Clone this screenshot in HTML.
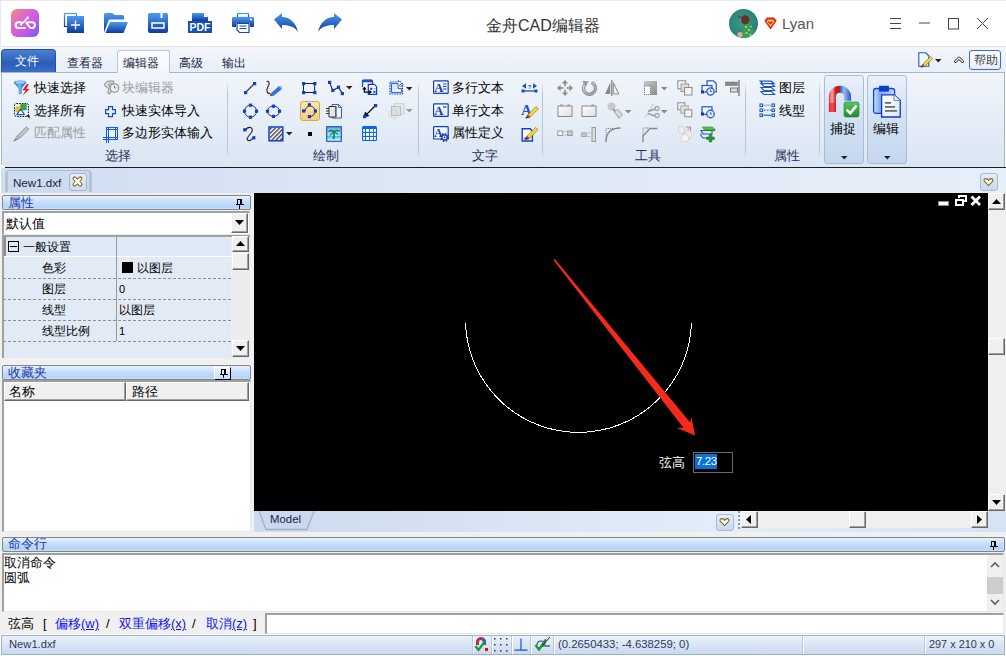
<!DOCTYPE html>
<html><head><meta charset="utf-8">
<style>
*{box-sizing:border-box;margin:0;padding:0}
html,body{width:1006px;height:656px;overflow:hidden;background:#fff;font-family:"Liberation Sans",sans-serif;font-size:12px;color:#000}
.a{position:absolute}
svg{position:absolute;overflow:visible}
#title{left:0;top:0;width:1006px;height:47px;background:#fff;border-top:1px solid #e8e8e8;border-left:1px solid #e8e8e8;border-bottom:1px solid #e3e3e3}
#tabs{left:0;top:47px;width:1006px;height:26px;background:linear-gradient(#f3f6fb,#e9eff8)}
#ribbon{left:1px;top:72px;width:1004px;height:95px;background:linear-gradient(#f1f5fb 0%,#e8eff8 40%,#dae5f3 100%);border:1px solid #a4b6ce;border-bottom:none}
#docstrip{left:1px;top:168px;width:1005px;height:25px;background:linear-gradient(90deg,#d0def2,#dfe8f5 50%,#e6eef9)}
#leftbg{left:0;top:193px;width:1006px;height:441px;background:#f0f0f0}
#canvas{left:254px;top:193px;width:736px;height:318px;background:#000}
#cmd{display:none}
#status{left:0;top:634px;width:1006px;height:22px;background:linear-gradient(#dde8f5,#cfdcee)}
.tt{font-size:12px;line-height:12px;white-space:nowrap;color:#15233f;font-weight:500}
.rt{font-size:13px;line-height:13px;white-space:nowrap;font-weight:500}
</style></head><body>
<div id="title" class="a"></div>
<!-- logo -->
<div class="a" style="left:11px;top:9px;width:28px;height:28px;border-radius:6px;background:linear-gradient(135deg,#f5916a 0%,#dc68cc 35%,#c055ee 70%,#5d62f2 100%)"></div>
<svg style="left:11px;top:9px" width="28" height="28" viewBox="0 0 28 28"><g fill="none" stroke="#fff" stroke-width="2" stroke-linecap="round"><path d="M10 13.2H7.5A2.9 2.9 0 0 0 7.5 19H14"/><path d="M15.2 13.6L18.8 18.3Q19.4 19 20.4 19H21A2.9 2.9 0 0 0 21 13.2H17"/><path d="M10 15.6L16.7 8.9" stroke-dasharray="1.6 1.2" stroke-width="1.6"/></g><circle cx="16.7" cy="8.9" r="1.3" fill="#fff"/><circle cx="10" cy="15.6" r="1.1" fill="#fff"/></svg>
<!-- new -->
<svg style="left:64px;top:13px" width="20" height="20" viewBox="0 0 20 20"><defs><linearGradient id="gb" x1="0" y1="0" x2="0" y2="1"><stop offset="0" stop-color="#4f9af0"/><stop offset="1" stop-color="#0b3c9e"/></linearGradient></defs><rect x="0.5" y="0.5" width="12" height="13" fill="none" stroke="url(#gb)" stroke-width="1.2"/><rect x="3" y="3" width="17" height="17" fill="url(#gb)"/><path d="M11.5 7.5v9M7 12h9" stroke="#fff" stroke-width="1.3"/></svg>
<!-- open -->
<svg style="left:104px;top:13px" width="24" height="20" viewBox="0 0 24 20"><path d="M0 1.5a1.5 1.5 0 0 1 1.5-1.5h7l2 2h8a1.5 1.5 0 0 1 1.5 1.5v3h-15l-5 13z" fill="url(#gb)"/><path d="M6 9h18l-4.5 11h-18z" fill="url(#gb)"/></svg>
<!-- save -->
<svg style="left:148px;top:13px" width="20" height="20" viewBox="0 0 20 20"><path d="M1.5 0h11v5h2v-5h3a2 2 0 0 1 2.5 2v16a2 2 0 0 1-2 2h-16a2 2 0 0 1-2-2v-16a2 2 0 0 1 1.5-2z" fill="url(#gb)"/><rect x="4" y="10" width="12" height="5" fill="none" stroke="#fff" stroke-width="1.5"/></svg>
<!-- pdf -->
<svg style="left:188px;top:13px" width="24" height="20" viewBox="0 0 24 20"><path d="M4 0h12l4 4v4h-16z" fill="url(#gb)"/><path d="M16 0v4h4" fill="#fff"/><rect x="0" y="8" width="24" height="12" fill="#1450b8"/><text x="12" y="18" font-family="Liberation Sans" font-weight="bold" font-size="10.5" fill="#fff" text-anchor="middle">PDF</text></svg>
<!-- print -->
<svg style="left:232px;top:13px" width="22" height="20" viewBox="0 0 22 20"><rect x="5.5" y="0.5" width="11" height="4" fill="none" stroke="url(#gb)" stroke-width="1.2"/><rect x="0" y="4" width="22" height="10" rx="1" fill="url(#gb)"/><circle cx="19" cy="6.5" r="1.1" fill="#fff"/><path d="M4 10h14v10h-11l-3-3z" fill="#fff"/><path d="M5 10.5h12v9h-9.5l-2.5-2.5z" fill="none" stroke="#1248a8" stroke-width="1.2"/><path d="M7.5 13h7M7.5 15.5h7" stroke="#1248a8" stroke-width="1"/></svg>
<!-- undo -->
<svg style="left:274px;top:13px" width="24" height="20" viewBox="0 0 24 20"><path d="M0 6.5L8 0v4c8 0 14 6 16 15c-3-5-8-7-16-7v4z" fill="url(#gb)"/></svg>
<!-- redo -->
<svg style="left:318px;top:13px" width="24" height="20" viewBox="0 0 24 20"><path d="M24 6.5L16 0v4c-8 0-14 6-16 15c3-5 8-7 16-7v4z" fill="url(#gb)"/></svg>
<!-- title -->
<div class="a" style="left:486px;top:16px;font-size:16px;line-height:20px;color:#333;white-space:nowrap">金舟CAD编辑器</div>
<!-- avatar -->
<svg style="left:729px;top:9px" width="29" height="29" viewBox="0 0 29 29"><defs><clipPath id="av"><circle cx="14.5" cy="14.5" r="14.5"/></clipPath><radialGradient id="avb" cx=".45" cy=".45" r=".6"><stop offset="0" stop-color="#3a9a8e"/><stop offset="1" stop-color="#2a7a72"/></radialGradient></defs><g clip-path="url(#av)"><rect width="29" height="29" fill="url(#avb)"/><path d="M9.5 5.5l2.5 2.5-1 4.5-1.5-1z" fill="#3a5a50"/><circle cx="11.5" cy="10.5" r="1.6" fill="#7a9a8a"/><path d="M14.5 14.5Q17 13.5 19.5 14.5Q24 17 25 24L25 30H13Q12 24 14.5 14.5z" fill="#3d9a58"/><g fill="#cfe8c8" opacity=".8"><circle cx="17" cy="18" r="1"/><circle cx="20" cy="21" r="1.1"/><circle cx="22" cy="17.5" r=".8"/><circle cx="17.5" cy="24" r="1"/><circle cx="21.5" cy="26" r="1"/></g><ellipse cx="16.2" cy="10.8" rx="4.3" ry="4.6" fill="#5c3526"/><path d="M8 25Q10 22 13 23.5L14 27 10 29z" fill="#d8b0a0"/></g></svg>
<svg style="left:764px;top:17px" width="13" height="13" viewBox="0 0 13 13"><path d="M3 0.5h7l2.7 3.3L6.5 12.5L0.3 3.8z" fill="#e02020"/><path d="M4 2.5h5l1.6 1.8L6.5 10L2.4 4.3z" fill="#f6c63a"/><path d="M4.5 4.5l2 2 2-2" fill="none" stroke="#e02020" stroke-width="1.4"/></svg>
<div class="a" style="left:782px;top:15px;font-size:15px;line-height:18px;color:#555">Lyan</div>
<!-- window controls -->
<svg style="left:890px;top:18px" width="12" height="12" viewBox="0 0 12 12"><path d="M0 0.5h11M0 5.5h11M0 10.5h11" stroke="#444" stroke-width="1"/></svg>
<svg style="left:919px;top:22px" width="12" height="2" viewBox="0 0 12 2"><path d="M0 1h11" stroke="#444" stroke-width="1"/></svg>
<svg style="left:948px;top:18px" width="12" height="12" viewBox="0 0 12 12"><rect x="0.5" y="0.5" width="10" height="10.5" fill="none" stroke="#444" stroke-width="1"/></svg>
<svg style="left:977px;top:18px" width="12" height="12" viewBox="0 0 12 12"><path d="M0 0L11 11M11 0L0 11" stroke="#444" stroke-width="1"/></svg>

<div id="tabs" class="a"></div>
<div id="ribbon" class="a"></div>
<!-- tabs -->
<div class="a" style="left:1px;top:49px;width:55px;height:23px;border-radius:4px 4px 0 0;background:linear-gradient(#4a7fd0,#2a5db8 60%,#3a6fc8);border:1px solid #2452a0;border-bottom:none"></div>
<div class="a tt" style="left:15px;top:55px;color:#fff">文件</div>
<div class="a tt" style="left:67px;top:58px;font-size:11.5px;line-height:11.5px">查看器</div>
<div class="a" style="left:117px;top:50px;width:53px;height:23px;border-radius:3px 3px 0 0;background:linear-gradient(#fbfdff,#f3f7fc);border:1px solid #b6c6dc;border-bottom:none"></div>
<div class="a tt" style="left:123px;top:58px;font-size:11.5px;line-height:11.5px">编辑器</div>
<div class="a tt" style="left:178.5px;top:58px;font-size:11.5px;line-height:11.5px">高级</div>
<div class="a tt" style="left:222px;top:58px;font-size:11.5px;line-height:11.5px">输出</div>

<!-- RIBBON CONTENT -->
<div id="rib">
<!-- group select -->
<svg style="left:13px;top:80px" width="18" height="17" viewBox="0 0 18 17"><defs><linearGradient id="fun" x1="0" x2="1"><stop offset="0" stop-color="#1a60c8"/><stop offset=".45" stop-color="#6ab8f8"/><stop offset="1" stop-color="#1858c0"/></linearGradient></defs><ellipse cx="7" cy="2.6" rx="6.2" ry="2.2" fill="#2a78e0"/><path d="M0.8 2.6Q7 5.5 13.2 2.6L8.8 8.5V13.5Q7.3 15 5.6 14.2V8.5z" fill="url(#fun)"/><ellipse cx="7" cy="2.4" rx="5" ry="1.3" fill="#9ad0ff"/><path d="M13.8 4L9.4 10.2h3.4L9.6 15.8l7-6.8h-3.3l2.6-5z" fill="#e81c24"/></svg>
<div class="a rt" style="left:34px;top:81px">快速选择</div>
<svg style="left:13px;top:102px" width="17" height="17" viewBox="0 0 17 17"><rect x="1.5" y="1.5" width="14" height="13" rx="2" fill="none" stroke="#111" stroke-width="1" stroke-dasharray="1.6 1.1"/><rect x="7.8" y="2.5" width="5.4" height="5.4" fill="#2eaa3a" stroke="#1a7a2a" stroke-width=".5"/><circle cx="5.5" cy="7.5" r="2.9" fill="#f5c518" stroke="#c89a10" stroke-width=".5"/><path d="M7.6 6.8L11.4 12.6H3.8z" fill="#fff" stroke="#1f5fc8" stroke-width="1.2" stroke-linejoin="round"/><path d="M13.2 13.2h3.3v3.3z" fill="#000"/></svg>
<div class="a rt" style="left:34px;top:104px">选择所有</div>
<svg style="left:13px;top:125px" width="17" height="17" viewBox="0 0 17 17"><path d="M1 16L4.5 10.5L13.5 1.8L16 4.2L7 13z" fill="#c4c4c4" stroke="#8a8a8a" stroke-width=".8"/><path d="M4.5 10.5L7 13" stroke="#9a9a9a" stroke-width="1"/><path d="M1 16l3.5-2.2" stroke="#888" stroke-width="1.2"/></svg>
<div class="a rt" style="left:34px;top:126px;color:#9a9a9a">匹配属性</div>
<svg style="left:104px;top:80px" width="16" height="16" viewBox="0 0 16 16"><path d="M0.5 3.5L4 1h6l-1 3H5v2l3 3-2 5-2.5-1L5 9 1 6z" fill="#d8d8d8" stroke="#888" stroke-width=".9"/><circle cx="10.5" cy="8" r="4.3" fill="#eee" stroke="#8a8a8a" stroke-width="1.1"/><path d="M10.5 5.5v2.5h2" fill="none" stroke="#888" stroke-width="1"/></svg>
<div class="a rt" style="left:122px;top:81px;color:#9a9a9a">块编辑器</div>
<svg style="left:105px;top:106px" width="11" height="11" viewBox="0 0 11 11"><path d="M3.5 0.6h4v3h2.9v4h-2.9v3h-4v-3H0.6v-4h2.9z" fill="#e8f0fc" stroke="#1448c8" stroke-width="1.2"/></svg>
<div class="a rt" style="left:122px;top:104px">快速实体导入</div>
<svg style="left:103px;top:126px" width="16" height="17" viewBox="0 0 16 17"><path d="M3 1.5h12M3 3.5h12M12.5 1v13M14.5 1v13M3.5 1v16M5.5 1v16M0 11.5h15M0 13.5h15" stroke="#0f5ae8" stroke-width="1"/><rect x="6" y="4" width="6" height="7" fill="#fff" opacity=".5"/></svg>
<div class="a rt" style="left:122px;top:126px">多边形实体输入</div>
<div class="a rt" style="left:105px;top:149px;color:#1f2f58">选择</div>
<div class="a" style="left:227px;top:81px;width:1px;height:81px;background:linear-gradient(#eef2f8,#b9c6d8 15%,#b9c6d8 85%,#eef2f8)"></div>
<!-- group draw -->
<svg style="left:240px;top:78px" width="20" height="20" viewBox="0 0 20 20"><path d="M5.5 14.5L14.5 5.5" stroke="#333" stroke-width="1.1"/><rect x="4" y="13" width="3.2" height="3.2" fill="#0c3fd6"/><rect x="13" y="4" width="3.2" height="3.2" fill="#0c3fd6"/></svg>
<svg style="left:264px;top:80px" width="20" height="16" viewBox="0 0 20 16"><path d="M2.5 1.5C5 0.5 6 3 4.5 5.5S2 10 3.5 12.5Q5 14 6 13" fill="none" stroke="#222" stroke-width="1.1"/><path d="M7 13.5L15 6.5L17.5 9L9.5 15.5L6.5 15.8z" fill="#2f76e0" stroke="#1f56b8" stroke-width=".6"/><path d="M15 6.5l1.2-1 2.4 2.5-1.1 1z" fill="#7fb4f2"/><circle cx="6.8" cy="15" r="1.1" fill="#e02a2a"/></svg>
<svg style="left:301px;top:81px" width="17" height="14" viewBox="0 0 17 14"><rect x="2.5" y="2.5" width="11.2" height="9" fill="none" stroke="#222" stroke-width="1"/><g fill="#0c3fd6"><rect x="1" y="1" width="3.2" height="3.2"/><rect x="12.2" y="1" width="3.2" height="3.2"/><rect x="1" y="10" width="3.2" height="3.2"/><rect x="12.2" y="10" width="3.2" height="3.2"/></g></svg>
<svg style="left:326px;top:80px" width="20" height="16" viewBox="0 0 20 16"><path d="M3.6 2.4L6.8 10.4L12.5 7.2L16.4 13.6" fill="none" stroke="#222" stroke-width="1.1"/><g fill="#0c3fd6"><rect x="2" y="0.8" width="3.2" height="3.2"/><rect x="5.2" y="8.8" width="3.2" height="3.2"/><rect x="10.9" y="5.6" width="3.2" height="3.2"/><rect x="14.8" y="12" width="3.2" height="3.2"/></g></svg>
<svg style="left:346px;top:86px" width="7" height="4" viewBox="0 0 7 4"><path d="M0 0h6.5L3.25 3.5z" fill="#222"/></svg>
<svg style="left:361px;top:79px" width="18" height="17" viewBox="0 0 18 17"><path d="M1.5 8V2.5Q1.5 1 3 1H10Q11.5 1 11.5 2.5V5" fill="#eef3fc" stroke="#0a50e0" stroke-width="1.2"/><rect x="1" y="0.8" width="10.8" height="2.4" rx="1" fill="#0a50e0"/><circle cx="9.6" cy="2.2" r="1.1" fill="#e01010"/><path d="M7.3 5.4H13.3L15.6 7.7V15.4H7.3z" fill="#fff" stroke="#0a3ec8" stroke-width="1.2"/><rect x="9.2" y="8.7" width="2.2" height="2.2" fill="#0a50e0"/><rect x="12.3" y="11.7" width="2.2" height="2.2" fill="#0a50e0"/><path d="M12.8 9.6h2" stroke="#888" stroke-width=".9"/><path d="M3.4 9.2V13.1H8.6" fill="none" stroke="#000" stroke-width="1.3"/><path d="M1.2 10.4L3.4 7.4L5.6 10.4z" fill="#000"/><path d="M8.2 10.9L11 13.1L8.2 15.3z" fill="#000"/></svg>
<svg style="left:388px;top:80px" width="17" height="16" viewBox="0 0 17 16"><path d="M2 2h7.5l1.5-1.5L14.5 4v10H2z" fill="none" stroke="#0c3fd6" stroke-width="1.2" stroke-dasharray="1.6 1"/><path d="M3.5 3.5h6.5v5h3.5v4H3.5z" fill="url(#lb)" stroke="#0c3fd6" stroke-width=".8"/><defs><linearGradient id="lb" x1="0" y1="0" x2="1" y2="1"><stop offset="0" stop-color="#cfe0fa"/><stop offset="1" stop-color="#f4f8ff"/></linearGradient></defs><path d="M11 6l3-3M12.5 7l2.5-2.5" stroke="#0c3fd6" stroke-width=".9"/></svg>
<svg style="left:406px;top:87px" width="7" height="4" viewBox="0 0 7 4"><path d="M0 0h6.5L3.25 3.5z" fill="#222"/></svg>
<svg style="left:242px;top:103px" width="17" height="16" viewBox="0 0 17 16"><circle cx="8.5" cy="8.2" r="6" fill="none" stroke="#333" stroke-width="1"/><g fill="#0c3fd6"><rect x="6.9" y="0.6" width="3.2" height="3.2"/><rect x="6.9" y="12.6" width="3.2" height="3.2"/><rect x="0.9" y="6.6" width="3.2" height="3.2"/><rect x="12.9" y="6.6" width="3.2" height="3.2"/></g></svg>
<svg style="left:265px;top:104px" width="17" height="15" viewBox="0 0 17 15"><ellipse cx="8.5" cy="7.2" rx="6" ry="5.2" fill="none" stroke="#333" stroke-width="1"/><g fill="#0c3fd6"><rect x="6.9" y="0.6" width="3.2" height="3.2"/><rect x="6.9" y="10.8" width="3.2" height="3.2"/><rect x="0.9" y="5.6" width="3.2" height="3.2"/><rect x="12.9" y="5.6" width="3.2" height="3.2"/></g></svg>
<div class="a" style="left:300px;top:101px;width:20px;height:20px;border-radius:3px;border:1px solid #dea44c;background:linear-gradient(#fde9ad,#f9cf78)"></div>
<svg style="left:300px;top:101px" width="20" height="20" viewBox="0 0 20 20"><path d="M5 10.5A5 5.8 0 1 1 15.2 11.2Q14 15 9.8 16.2" fill="none" stroke="#333" stroke-width="1"/><g fill="#0c3fd6"><rect x="7.8" y="2.2" width="3.2" height="3.2"/><rect x="2" y="8.4" width="3.2" height="3.2"/><rect x="13.8" y="8.4" width="3.2" height="3.2"/><rect x="7.8" y="14" width="3.2" height="3.2"/></g></svg>
<svg style="left:325px;top:103px" width="18" height="16" viewBox="0 0 18 16"><path d="M7 1.5h6.5L16.5 4.5V15H7z" fill="#eef3fc" stroke="#2560c8" stroke-width="1"/><path d="M13.5 1.5v3h3" fill="none" stroke="#2560c8" stroke-width=".8"/><path d="M4 3.5h7v10.5H4z" fill="#e8e8e8" stroke="#333" stroke-width="1"/><path d="M1 5.5h3M1 8h3M1 10.5h3" stroke="#333" stroke-width="1"/><path d="M11 3.5q-1.5 5 0 10.5" fill="none" stroke="#555" stroke-width=".8"/></svg>
<svg style="left:362px;top:103px" width="16" height="16" viewBox="0 0 16 16"><path d="M13.5 2.5L3 13" stroke="#111" stroke-width="1.3"/><path d="M1.5 14.5l1.5-6 4.5 4.5z" fill="#111"/><rect x="12" y="1" width="3.2" height="3.2" fill="#0c3fd6"/><rect x="1" y="12" width="3.2" height="3.2" fill="#0c3fd6"/></svg>
<svg style="left:388px;top:103px" width="17" height="16" viewBox="0 0 17 16"><rect x="6" y="0.8" width="10" height="10" fill="#ececec" stroke="#c8c8c8" stroke-width=".9"/><rect x="3.5" y="3.5" width="9" height="9" fill="#e0e0e0" stroke="#b8b8b8" stroke-width=".9"/><circle cx="5.2" cy="11" r="4.3" fill="none" stroke="#d2d2d2" stroke-width="1"/></svg>
<svg style="left:406px;top:109px" width="7" height="4" viewBox="0 0 7 4"><path d="M0 0h6.5L3.25 3.5z" fill="#999"/></svg>
<svg style="left:242px;top:126px" width="15" height="16" viewBox="0 0 15 16"><path d="M3.5 4.5Q5 0.8 8.5 1.5Q11.5 2.5 9.5 6.5Q6.5 10 5 12.5Q5 15 8 14.5Q10 13.5 11 12" fill="none" stroke="#222" stroke-width="1.1"/><rect x="1.2" y="2.2" width="3.2" height="3.2" fill="#0c3fd6"/><rect x="10.2" y="10.2" width="3.2" height="3.2" fill="#0c3fd6"/></svg>
<svg style="left:268px;top:126px" width="16" height="16" viewBox="0 0 16 16"><defs><pattern id="ht" width="3" height="3" patternUnits="userSpaceOnUse" patternTransform="rotate(45)"><rect width="1.3" height="3" fill="#333"/></pattern></defs><rect x="1.7" y="1.7" width="12.3" height="12.3" fill="#fff"/><rect x="1.7" y="1.7" width="12.3" height="12.3" fill="url(#ht)"/><rect x="1" y="1" width="13.8" height="13.8" fill="none" stroke="#0c3fd6" stroke-width="1.5"/></svg>
<svg style="left:286px;top:132px" width="7" height="4" viewBox="0 0 7 4"><path d="M0 0h6.5L3.25 3.5z" fill="#222"/></svg>
<div class="a" style="left:308px;top:132px;width:4px;height:4px;background:#000"></div>
<svg style="left:326px;top:126px" width="16" height="16" viewBox="0 0 16 16"><defs><linearGradient id="sky" x1="0" y1="0" x2="0" y2="1"><stop offset="0" stop-color="#5aa8f0"/><stop offset=".65" stop-color="#bfe4ff"/><stop offset=".66" stop-color="#36c0f0"/><stop offset="1" stop-color="#ffffff"/></linearGradient></defs><rect x="0.7" y="0.7" width="14.6" height="14.6" fill="url(#sky)" stroke="#1f56c0" stroke-width="1.2"/><path d="M7.5 13Q8.5 9 8 5" stroke="#0f7a3a" stroke-width="1.6" fill="none"/><path d="M8 5Q5 3 2.5 5.5Q5 4.5 8 5.5Q10.5 3 13.5 5Q11 4.3 8 5.5Q6 7 4 9.5Q7 7 8 5.5Q10 7 12 9Q10.5 6 8 5.5z" fill="#138a44" stroke="#138a44" stroke-width="1"/></svg>
<svg style="left:362px;top:126px" width="15" height="15" viewBox="0 0 15 15"><rect x="0" y="0" width="15" height="15" rx="1.5" fill="#0a62ee"/><g fill="#f4f8ff"><rect x="1.1" y="3" width="1.9" height="2.9"/><rect x="1.1" y="7" width="1.9" height="2.9"/><rect x="1.1" y="11" width="1.9" height="2.9"/><rect x="4" y="3" width="3.0" height="2.9"/><rect x="4" y="7" width="3.0" height="2.9"/><rect x="4" y="11" width="3.0" height="2.9"/><rect x="7.9" y="3" width="3.1" height="2.9"/><rect x="7.9" y="7" width="3.1" height="2.9"/><rect x="7.9" y="11" width="3.1" height="2.9"/><rect x="11.9" y="3" width="2.0" height="2.9"/><rect x="11.9" y="7" width="2.0" height="2.9"/><rect x="11.9" y="11" width="2.0" height="2.9"/></g></svg>
<div class="a rt" style="left:313px;top:149px;color:#1f2f58">绘制</div>
<div class="a" style="left:418px;top:81px;width:1px;height:81px;background:linear-gradient(#eef2f8,#b9c6d8 15%,#b9c6d8 85%,#eef2f8)"></div>
<!-- group text -->
<svg style="left:433px;top:80px" width="16" height="14" viewBox="0 0 16 14"><rect x="0.6" y="0.9" width="14.6" height="12.4" rx=".6" fill="url(#tb)" stroke="#1040c0" stroke-width="1.2"/><defs><linearGradient id="tb" x1="0" y1="0" x2="1" y2="1"><stop offset="0" stop-color="#fff"/><stop offset="1" stop-color="#dfe9f8"/></linearGradient></defs><text x="1.3" y="12" font-family="Liberation Serif" font-weight="bold" font-size="12.5" fill="#1038b0">A</text><path d="M10 4h3.5M10 6.5h3.5M10 9h3.5" stroke="#1b4fb8" stroke-width="1"/></svg>
<div class="a rt" style="left:452px;top:81px">多行文本</div>
<svg style="left:433px;top:103px" width="16" height="14" viewBox="0 0 16 14"><rect x="0.6" y="0.9" width="14.6" height="12.4" rx=".6" fill="url(#tb)" stroke="#1040c0" stroke-width="1.2"/><text x="1.3" y="12" font-family="Liberation Serif" font-weight="bold" font-size="12.5" fill="#1038b0">A</text><path d="M10 4h3.5" stroke="#1b4fb8" stroke-width="1.2"/></svg>
<div class="a rt" style="left:452px;top:104px">单行文本</div>
<svg style="left:433px;top:126px" width="17" height="17" viewBox="0 0 17 17"><rect x="0.6" y="0.6" width="14.6" height="12.4" rx=".6" fill="url(#tb)" stroke="#1040c0" stroke-width="1.2"/><text x="1.3" y="10.8" font-family="Liberation Serif" font-weight="bold" font-size="11.5" fill="#1038b0">A</text><circle cx="11.5" cy="11.5" r="3.3" fill="none" stroke="#1a3aa8" stroke-width="2.6" stroke-dasharray="1.3 1.3"/><circle cx="11.5" cy="11.5" r="2.6" fill="#e8f0ff" stroke="#1a3aa8" stroke-width="1.1"/><circle cx="11.5" cy="11.5" r=".9" fill="#1a3aa8"/></svg>
<div class="a rt" style="left:452px;top:126px">属性定义</div>
<svg style="left:521px;top:83px" width="17" height="10" viewBox="0 0 17 10"><path d="M1.5 8h14" stroke="#1b4fb8" stroke-width="1.3"/><rect x="0.5" y="6.5" width="3" height="3" fill="#1b4fb8"/><rect x="13.5" y="6.5" width="3" height="3" fill="#1b4fb8"/><path d="M1 3L5 0.3v5.4zM16 3L12 0.3v5.4z" fill="#1b4fb8"/><text x="8.5" y="5.5" font-family="Liberation Sans" font-weight="bold" font-size="6" fill="#1b4fb8" text-anchor="middle">?</text></svg>
<svg style="left:521px;top:102px" width="18" height="17" viewBox="0 0 18 17"><text x="0" y="13" font-family="Liberation Serif" font-weight="bold" font-size="15" fill="#1f56c8">A</text><path d="M6 13.8L15 4.6L17.4 6.8L8.3 15.8z" fill="#f6d830" stroke="#7a6a10" stroke-width=".6"/><path d="M6 13.8L4.2 16.6L8.3 15.8z" fill="#2a2a3a"/><path d="M6.6 13.2L8.9 15.3" stroke="#e02828" stroke-width="1.3"/></svg>
<svg style="left:521px;top:125px" width="18" height="17" viewBox="0 0 18 17"><path d="M1.2 3.8h8l2.2 2.2v10H1.2z" fill="url(#tb)" stroke="#1040c8" stroke-width="1.4"/><path d="M3 13.2h5.5" stroke="#1040c8" stroke-width="1"/><path d="M5.2 12L14.6 2.4L17 4.6L7.6 14.2z" fill="#f6d830" stroke="#7a6a10" stroke-width=".6"/><path d="M5.2 12L3.4 14.9L7.6 14.2z" fill="#2a2a3a"/><path d="M5.8 11.4L8.1 13.5" stroke="#e02828" stroke-width="1.3"/></svg>
<div class="a rt" style="left:472px;top:149px;color:#1f2f58">文字</div>
<div class="a" style="left:542px;top:81px;width:1px;height:81px;background:linear-gradient(#eef2f8,#b9c6d8 15%,#b9c6d8 85%,#eef2f8)"></div>
<!-- group tools -->
<defs></defs>
<svg style="left:557px;top:80px" width="16" height="16" viewBox="0 0 16 16"><g fill="#8a8a8a"><path d="M8 0L11.2 3.6H4.8z"/><path d="M8 16L11.2 12.4H4.8z"/><path d="M0 8L3.6 4.8V11.2z"/><path d="M16 8L12.4 4.8V11.2z"/></g><path d="M8 3v10M3 8h10" stroke="#9a9a9a" stroke-width="1.8"/><rect x="6.3" y="6.3" width="3.4" height="3.4" fill="#eee"/></svg>
<svg style="left:581px;top:80px" width="16" height="16" viewBox="0 0 16 16"><defs><linearGradient id="rg" x1="0" y1="0" x2="1" y2="1"><stop offset="0" stop-color="#e0e0e0"/><stop offset="1" stop-color="#9a9a9a"/></linearGradient></defs><path d="M5.2 3.2A6 6 0 1 0 10.5 2.6" fill="none" stroke="#8e8e8e" stroke-width="3.4"/><path d="M5.2 3.2A6 6 0 1 0 10.5 2.6" fill="none" stroke="url(#rg)" stroke-width="1.6"/><path d="M1.2 0.8L7.6 1.2L4.6 6.6z" fill="#999"/></svg>
<svg style="left:604px;top:80px" width="16" height="16" viewBox="0 0 16 16"><path d="M7.8 0v16" stroke="#666" stroke-width="1"/><path d="M6.3 2.5v11.5H1z" fill="#8a8a8a"/><path d="M9.3 2.5v11.5h5.5z" fill="#eee" stroke="#8a8a8a" stroke-width="1"/></svg>
<svg style="left:643px;top:80px" width="15" height="16" viewBox="0 0 15 16"><defs><linearGradient id="gg" x1="0" y1="0" x2="1" y2="1"><stop offset="0" stop-color="#c8c8c8"/><stop offset="1" stop-color="#8c8c8c"/></linearGradient></defs><rect x="1" y="1" width="13" height="14" fill="url(#gg)"/><rect x="1.5" y="6" width="6" height="8.5" fill="#fff" stroke="#777" stroke-width="1" stroke-dasharray="1 1"/></svg>
<svg style="left:661px;top:87px" width="7" height="4" viewBox="0 0 7 4"><path d="M0 0h6.5L3.25 3.5z" fill="#888"/></svg>
<svg style="left:677px;top:80px" width="16" height="16" viewBox="0 0 16 16"><rect x="0.8" y="0.8" width="8" height="8" fill="#f4f4f4" stroke="#8a8a8a" stroke-width="1"/><rect x="4" y="4" width="7.5" height="7.5" fill="#ddd" stroke="#9a9a9a" stroke-width="1"/><rect x="7.5" y="7.5" width="7.5" height="7.5" fill="#f4f4f4" stroke="#8a8a8a" stroke-width="1"/></svg>
<svg style="left:701px;top:80px" width="16" height="16" viewBox="0 0 16 16"><path d="M6 0.8h6.5l2.7 2.7v8.5H6z" fill="#fff" stroke="#1f56c8" stroke-width="1.2"/><rect x="1" y="5.5" width="10" height="6.5" fill="#f2f6fd" stroke="#1f56c8" stroke-width="1.2"/><rect x="0" y="10.5" width="3" height="3" fill="#1238a8"/><circle cx="9.5" cy="11.5" r="3.6" fill="#dbe6fa" stroke="#1f56c8" stroke-width="1.2"/><path d="M9.5 9.5v2h1.5" stroke="#1f56c8" stroke-width=".8" fill="none"/></svg>
<svg style="left:725px;top:80px" width="15" height="16" viewBox="0 0 15 16"><path d="M14 0v16" stroke="#666" stroke-width="1.2"/><rect x="0.5" y="2" width="12" height="3.5" fill="#888" stroke="#777" stroke-width=".6"/><rect x="5.5" y="8" width="7" height="4" fill="#ddd" stroke="#777" stroke-width="1"/></svg>
<svg style="left:557px;top:104px" width="16" height="13" viewBox="0 0 16 13"><rect x="1" y="2" width="14" height="10.5" fill="url(#box)" stroke="#8a8a8a" stroke-width="1"/><defs><linearGradient id="box" x1="0" y1="0" x2="1" y2="1"><stop offset="0" stop-color="#fff"/><stop offset="1" stop-color="#ddd"/></linearGradient></defs><rect x="3" y="0.3" width="2.6" height="2.4" fill="#aaa"/><rect x="10.3" y="0.3" width="2.6" height="2.4" fill="#aaa"/></svg>
<svg style="left:581px;top:104px" width="16" height="13" viewBox="0 0 16 13"><rect x="1" y="2" width="14" height="10.5" fill="url(#box)" stroke="#8a8a8a" stroke-width="1"/><rect x="10.3" y="0.3" width="2.6" height="2.4" fill="#aaa"/></svg>
<svg style="left:607px;top:102px" width="16" height="17" viewBox="0 0 16 17"><circle cx="4.5" cy="4.5" r="4" fill="#c8c8c8"/><path d="M6 7l3 3" stroke="#999" stroke-width="2"/><path d="M7.5 10l3-3 5 5.5-3.5 4z" fill="#d8d8d8" stroke="#9a9a9a" stroke-width=".9"/></svg>
<svg style="left:625px;top:110px" width="7" height="4" viewBox="0 0 7 4"><path d="M0 0h6.5L3.25 3.5z" fill="#888"/></svg>
<svg style="left:644px;top:103px" width="16" height="16" viewBox="0 0 16 16"><path d="M9 1L0.8 15" stroke="#aaa" stroke-width="1" stroke-dasharray="1.5 1.2"/><path d="M4 8.5l8-3M4 10.5l8 3" stroke="#9a9a9a" stroke-width="1.4"/><circle cx="13" cy="5.5" r="2" fill="none" stroke="#aaa" stroke-width="1.3"/><circle cx="13" cy="12.5" r="2" fill="none" stroke="#aaa" stroke-width="1.3"/></svg>
<svg style="left:661px;top:110px" width="7" height="4" viewBox="0 0 7 4"><path d="M0 0h6.5L3.25 3.5z" fill="#888"/></svg>
<svg style="left:677px;top:102px" width="16" height="16" viewBox="0 0 16 16"><rect x="0.8" y="0.8" width="7" height="7" fill="#f4f4f4" stroke="#8a8a8a" stroke-width="1"/><rect x="3.8" y="3.8" width="7.5" height="7.5" fill="#ddd" stroke="#aaa" stroke-width="1"/><rect x="7.8" y="7.8" width="7" height="7" fill="#f4f4f4" stroke="#8a8a8a" stroke-width="1"/></svg>
<svg style="left:701px;top:106px" width="16" height="13" viewBox="0 0 16 13"><rect x="1" y="0.8" width="10" height="7.5" fill="#f2f6fd" stroke="#1f56c8" stroke-width="1.2"/><rect x="0" y="6.5" width="3" height="3" fill="#1238a8"/><circle cx="9.5" cy="8" r="3.8" fill="#dbe6fa" stroke="#1f56c8" stroke-width="1.2"/><path d="M9.5 6v2h1.5" stroke="#1f56c8" stroke-width=".8" fill="none"/></svg>
<svg style="left:557px;top:130px" width="16" height="7" viewBox="0 0 16 7"><rect x="0.8" y="1" width="4.5" height="4.5" fill="#fff" stroke="#999" stroke-width="1"/><rect x="10.7" y="1" width="4.5" height="4.5" fill="#ccc" stroke="#999" stroke-width="1"/><path d="M6.5 1.5h.8M8.5 1.5h.8M6.5 5h.8M8.5 5h.8" stroke="#888" stroke-width="1"/></svg>
<svg style="left:581px;top:127px" width="16" height="15" viewBox="0 0 16 15"><rect x="0.7" y="6" width="4.5" height="3.5" fill="#ccc" stroke="#999" stroke-width=".9"/><path d="M6.5 6h.8M8.5 6h.8M6.5 9.5h.8M8.5 9.5h.8" stroke="#888" stroke-width="1"/><rect x="11" y="0.5" width="3.5" height="14" fill="#ddd" stroke="#999" stroke-width="1"/></svg>
<svg style="left:605px;top:127px" width="16" height="15" viewBox="0 0 16 15"><path d="M1 15V1.5h11" fill="none" stroke="#777" stroke-width="1" stroke-dasharray="1 1.2"/><path d="M1 15Q1 1 15.5 1" fill="none" stroke="#888" stroke-width="1.3"/></svg>
<svg style="left:642px;top:127px" width="16" height="15" viewBox="0 0 16 15"><path d="M1 8V1h7" fill="none" stroke="#777" stroke-width="1" stroke-dasharray="1 1.2"/><path d="M1 15V9L8 1.5h7.5" fill="none" stroke="#888" stroke-width="1.3"/></svg>
<svg style="left:677px;top:126px" width="16" height="16" viewBox="0 0 16 16"><circle cx="4.5" cy="4" r="3.5" fill="#eee" stroke="#ccc" stroke-width=".8"/><circle cx="11" cy="9" r="3.8" fill="#f0f0f0" stroke="#ccc" stroke-width=".8"/><circle cx="8" cy="12" r="3.8" fill="#f4f4f4" stroke="#ccc" stroke-width=".8"/><path d="M9 1h4.5v4M13.5 1l-3 3" fill="none" stroke="#999" stroke-width="1"/></svg>
<svg style="left:700px;top:126px" width="17" height="16" viewBox="0 0 17 16"><path d="M1 4.5h11v3.5H3.2z" fill="none" stroke="#1f56c8" stroke-width="1.1"/><path d="M1 7.5v2l2 2.5h9" fill="none" stroke="#1f56c8" stroke-width="1.1"/><path d="M2 1h10.5l3 3H4.5z" fill="#5dbb4a" stroke="#2f8a2a" stroke-width=".6"/><path d="M2.5 4.5h12.5" stroke="#2f8a2a" stroke-width="1.2"/><path d="M9.2 8.5h2.6v2.5h2.5v2.6h-2.5V16H9.2v-2.4H6.7V11h2.5z" fill="#1d9a2a" stroke="#0d6a1a" stroke-width=".5"/></svg>
<div class="a rt" style="left:635px;top:149px;color:#1f2f58">工具</div>
<div class="a" style="left:745px;top:81px;width:1px;height:81px;background:linear-gradient(#eef2f8,#b9c6d8 15%,#b9c6d8 85%,#eef2f8)"></div>
<!-- group props -->
<svg style="left:759px;top:80px" width="17" height="16" viewBox="0 0 17 16"><g fill="#fff" stroke="#1f56c8" stroke-width="1.2"><path d="M2 11.5h10.5l3 3H5z"/><path d="M2 7.5h10.5l3 3H5z"/><path d="M2 3.5h10.5l3 3H5z"/><path d="M1.2 1.2h11l3 2.5H4z"/></g></svg>
<div class="a rt" style="left:779px;top:81px">图层</div>
<svg style="left:759px;top:103px" width="17" height="15" viewBox="0 0 17 15"><g fill="#fff" stroke="#1f56c8" stroke-width="1.1"><rect x="1" y="1" width="2.5" height="2.5"/><rect x="13" y="1" width="2.5" height="2.5"/><rect x="1" y="6" width="2.5" height="2.5"/><rect x="13" y="6" width="2.5" height="2.5"/><rect x="1" y="11" width="2.5" height="2.5"/><rect x="13" y="11" width="2.5" height="2.5"/></g><path d="M4.5 2.2h8" stroke="#1f56c8" stroke-width="1" stroke-dasharray="1 1"/><path d="M4.5 7.2h8" stroke="#1f56c8" stroke-width="1" stroke-dasharray="2 1.2"/><path d="M4.5 12.2h8" stroke="#1f56c8" stroke-width="1.1"/></svg>
<div class="a rt" style="left:779px;top:104px">线型</div>
<div class="a rt" style="left:774px;top:149px;color:#1f2f58">属性</div>
<div class="a" style="left:819px;top:81px;width:1px;height:81px;background:linear-gradient(#eef2f8,#b9c6d8 15%,#b9c6d8 85%,#eef2f8)"></div>
<!-- big buttons -->
<div class="a" style="left:824px;top:75px;width:40px;height:89px;border-radius:3px;border:1px solid #a9bdd8;background:linear-gradient(#e9f0fa,#d3e1f3 45%,#c5d7ef)"></div>
<svg style="left:828px;top:85px" width="32" height="33" viewBox="0 0 32 33"><defs><linearGradient id="mg" x1="0" y1="0" x2="24" y2="0" gradientUnits="userSpaceOnUse"><stop offset="0" stop-color="#d81818"/><stop offset=".17" stop-color="#f0a8a8"/><stop offset=".33" stop-color="#c41818"/><stop offset=".499" stop-color="#b82020"/><stop offset=".5" stop-color="#2a5ac8"/><stop offset=".67" stop-color="#9ab8ee"/><stop offset="1" stop-color="#1c4cc0"/></linearGradient><linearGradient id="ck" x1="0" y1="0" x2="0" y2="1"><stop offset="0" stop-color="#5cc860"/><stop offset="1" stop-color="#1f8a2a"/></linearGradient></defs><path d="M0.9 27V11.9A11.1 11.1 0 0 1 23.1 11.9V15.7H16.1V11.9A4.1 4.1 0 0 0 7.9 11.9V27Z" fill="url(#mg)"/><path d="M0.9 27V18H7.9V27Z" fill="#f01818" opacity=".6"/><rect x="16" y="17" width="15" height="15" rx="2" fill="url(#ck)" stroke="#2a7a2a" stroke-width=".6"/><path d="M18.6 24.6l3.6 3.6 6.2-7.6" fill="none" stroke="#fff" stroke-width="2.6"/></svg>
<div class="a rt" style="left:830px;top:122px">捕捉</div>
<svg style="left:841px;top:156px" width="7" height="4" viewBox="0 0 7 4"><path d="M0 0h6.5L3.25 3.5z" fill="#222"/></svg>
<div class="a" style="left:867px;top:75px;width:40px;height:89px;border-radius:3px;border:1px solid #a9bdd8;background:linear-gradient(#e9f0fa,#d3e1f3 45%,#c5d7ef)"></div>
<svg style="left:872px;top:85px" width="30" height="34" viewBox="0 0 30 34"><defs><linearGradient id="cb" x1="0" x2="1"><stop offset="0" stop-color="#cfe0fa"/><stop offset=".3" stop-color="#7eaaf0"/><stop offset="1" stop-color="#c8dcfa"/></linearGradient><linearGradient id="dc" x1="0" y1="0" x2="1" y2="1"><stop offset="0" stop-color="#fff"/><stop offset="1" stop-color="#dfe6f8"/></linearGradient></defs><rect x="1.6" y="3.5" width="21" height="24.8" rx="2.5" fill="url(#cb)" stroke="#1048d8" stroke-width="1.3"/><rect x="7.1" y="0.8" width="9.8" height="5.8" fill="#0a3ed0"/><path d="M9.6 9.9H22L28.2 15.4V32H9.6z" fill="url(#dc)" stroke="#0c3ad0" stroke-width="1.3"/><path d="M22 9.9V15.4H28.2" fill="#eef2fb" stroke="#6a7aa8" stroke-width=".9"/><path d="M13 17.9h6M13 21.8h10M13 25.8h12" stroke="#6a6a6a" stroke-width="1.7"/></svg>
<div class="a rt" style="left:873px;top:122px">编辑</div>
<svg style="left:884px;top:156px" width="7" height="4" viewBox="0 0 7 4"><path d="M0 0h6.5L3.25 3.5z" fill="#222"/></svg>
<!-- top right ribbon controls -->
<svg style="left:918px;top:52px" width="16" height="16" viewBox="0 0 16 16"><path d="M0.8 0.8h7l3 3v10.5H0.8z" fill="url(#tb)" stroke="#1f56c0" stroke-width="1.1"/><path d="M4 13L12.5 4.5L14.5 6.5L6 15z" fill="#f3d63a" stroke="#6a5a10" stroke-width=".5"/><path d="M4 13l-1.5 2.5 3.5-.5z" fill="#333"/><path d="M4.8 12.2l1.4 1.4" stroke="#e03030" stroke-width="1.2"/></svg>
<svg style="left:935px;top:59px" width="7" height="4" viewBox="0 0 7 4"><path d="M0 0h6.5L3.25 3.5z" fill="#222"/></svg>
<svg style="left:954px;top:55px" width="10" height="9" viewBox="0 0 10 9"><path d="M1.5 6.5L5 3L8.5 6.5" fill="none" stroke="#3a3a3a" stroke-width="3" stroke-linecap="round" stroke-linejoin="round"/><path d="M1.5 6.5L5 3L8.5 6.5" fill="none" stroke="#f4f7fb" stroke-width="1.1" stroke-linecap="round" stroke-linejoin="round"/></svg>
<div class="a" style="left:969px;top:50px;width:32px;height:20px;border-radius:3px;border:1px solid #3a6cd0;background:linear-gradient(#ffffff,#e6eefa)"></div>
<div class="a tt" style="left:974px;top:54px;color:#444">帮助</div>
</div>
<div id="docstrip" class="a"></div><div class="a" style="left:5px;top:167px;width:1001px;height:1px;background:#1b1b1b"></div>
<div id="leftbg" class="a"></div>
<div id="canvas" class="a"></div>
<div id="cmd" class="a"></div>
<div class="a" style="left:0;top:165px;width:5px;height:2px;background:#f4f6fa"></div>
<!-- doc tab -->
<div class="a" style="left:5px;top:170px;width:87px;height:22px;border:1px solid #aabbd3;border-left:3px solid #b3c3da;border-right:3px solid #b3c3da;border-bottom:none;border-radius:4px 4px 0 0;background:#ccdbf0"></div>
<div class="a tt" style="left:13px;top:177px;color:#15233f;font-size:11.6px;font-family:'Liberation Sans'">New1.dxf</div>
<div class="a" style="left:69px;top:173px;width:18px;height:18px;border:1px solid #a4b4cc;border-radius:3px;background:linear-gradient(#e6eef9,#cfdcee)"></div>
<svg style="left:72px;top:176px" width="11" height="11" viewBox="0 0 11 11"><path d="M2.6 2.6L8.4 8.4M8.4 2.6L2.6 8.4" stroke="#7a6420" stroke-width="4.2" stroke-linecap="round"/><path d="M2.6 2.6L8.4 8.4M8.4 2.6L2.6 8.4" stroke="#fff" stroke-width="2.3" stroke-linecap="round"/></svg>
<div class="a" style="left:980px;top:173px;width:18px;height:18px;border:1px solid #a9bbd4;border-radius:3px;background:linear-gradient(#e6eef9,#c9d8ee)"></div>
<svg style="left:983px;top:177px" width="11" height="10" viewBox="0 0 11 10"><path d="M5.5 8.6L1.2 4.2Q0.6 2 2.6 1.6Q4.3 1.4 5.5 3.4Q6.7 1.4 8.4 1.6Q10.4 2 9.8 4.2z" fill="#fff" stroke="#7a6a20" stroke-width="1.1" stroke-linejoin="round"/></svg>
<!-- left panel: properties -->
<div class="a" style="left:2px;top:195px;width:249px;height:15px;border:1px solid #858585;border-radius:2px;background:linear-gradient(#e6f1fe,#c3dcfb 50%,#b5d4fa 85%,#c9e0fc)"></div>
<div class="a rt" style="left:8px;top:196px;color:#1c3aa6;font-size:13px;font-weight:normal">属性</div>
<svg style="left:236px;top:199px" width="8" height="10" viewBox="0 0 8 10" shape-rendering="crispEdges"><path d="M1 0h5v1H1zM1 0h1v5H1zM4 0h2v5H4zM0 5h8v1H0zM3 6h1v4H3z" fill="#000"/></svg>
<div class="a" style="left:2px;top:211px;width:248px;height:24px;background:#fff;border-top:2px solid #a0a0a0;border-left:2px solid #a0a0a0;border-right:1px solid #e8e8e8;border-bottom:1px solid #e8e8e8"></div>
<div class="a rt" style="left:6px;top:217px">默认值</div>
<div class="a" style="left:231px;top:213px;width:17px;height:20px;background:#f0f0f0;border-top:1px solid #fff;border-left:1px solid #fff;border-right:1px solid #696969;border-bottom:1px solid #696969;box-shadow:inset -1px -1px 0 #a0a0a0"></div>
<svg style="left:235px;top:220px" width="9" height="5" viewBox="0 0 9 5"><path d="M0 0h9L4.5 5z" fill="#000"/></svg>
<!-- grid -->
<div class="a" style="left:2px;top:235px;width:248px;height:123px;background:#e2eaf6;border-top:2px solid #a0a0a0;border-left:2px solid #a0a0a0"></div>
<div class="a" style="left:4px;top:237px;width:227px;height:19px;background:#dfe8f5;border-left:2px solid #8d8d8d"></div>
<div class="a" style="left:4px;top:256px;width:227px;height:1px;background:#fff"></div>
<div class="a" style="left:116px;top:237px;width:1px;height:104px;background:#9a9a9a"></div>
<div class="a" style="left:3px;top:278px;width:228px;height:0;border-top:1px dashed #909090"></div>
<div class="a" style="left:3px;top:299px;width:228px;height:0;border-top:1px dashed #909090"></div>
<div class="a" style="left:3px;top:320px;width:228px;height:0;border-top:1px dashed #909090"></div>
<div class="a" style="left:3px;top:341px;width:228px;height:0;border-top:1px dashed #909090"></div>
<svg style="left:8px;top:241px" width="12" height="11" viewBox="0 0 12 11" shape-rendering="crispEdges"><path d="M0 0h11v1H0zM0 10h11v1H0zM0 0h1v11H0zM10 0h1v11H10zM2 5h7v1H2z" fill="#000"/></svg>
<div class="a tt" style="left:23px;top:241px;color:#000">一般设置</div>
<div class="a tt" style="left:42px;top:262px;color:#000">色彩</div>
<div class="a" style="left:122px;top:262px;width:11px;height:11px;background:#000"></div>
<div class="a tt" style="left:137px;top:262px;color:#000">以图层</div>
<div class="a tt" style="left:42px;top:283px;color:#000">图层</div>
<div class="a tt" style="left:119px;top:283px;color:#000;font-family:'Liberation Sans';font-size:11px">0</div>
<div class="a tt" style="left:42px;top:304px;color:#000">线型</div>
<div class="a tt" style="left:119px;top:304px;color:#000">以图层</div>
<div class="a tt" style="left:42px;top:325px;color:#000">线型比例</div>
<div class="a tt" style="left:119px;top:325px;color:#000;font-family:'Liberation Sans';font-size:11px">1</div>
<!-- grid scrollbar -->
<div class="a" style="left:231px;top:237px;width:18px;height:120px;background:repeating-conic-gradient(#f4f4f4 0 25%,#e6e6e6 0 50%) 0 0/2px 2px"></div>
<div class="a" style="left:232px;top:236px;width:17px;height:16px;background:#f0f0f0;border-top:1px solid #fff;border-left:1px solid #fff;border-right:1px solid #696969;border-bottom:1px solid #696969;box-shadow:inset -1px -1px 0 #a0a0a0"></div>
<svg style="left:236px;top:241px" width="9" height="5" viewBox="0 0 9 5"><path d="M0 5h9L4.5 0z" fill="#000"/></svg>
<div class="a" style="left:232px;top:253px;width:17px;height:17px;background:#f0f0f0;border-top:1px solid #fff;border-left:1px solid #fff;border-right:1px solid #696969;border-bottom:1px solid #696969;box-shadow:inset -1px -1px 0 #a0a0a0"></div>
<div class="a" style="left:232px;top:340px;width:17px;height:17px;background:#f0f0f0;border-top:1px solid #fff;border-left:1px solid #fff;border-right:1px solid #696969;border-bottom:1px solid #696969;box-shadow:inset -1px -1px 0 #a0a0a0"></div>
<svg style="left:236px;top:346px" width="9" height="5" viewBox="0 0 9 5"><path d="M0 0h9L4.5 5z" fill="#000"/></svg>
<!-- favorites -->
<div class="a" style="left:2px;top:365px;width:249px;height:15px;border:1px solid #858585;border-radius:2px;background:linear-gradient(#e6f1fe,#c3dcfb 50%,#b5d4fa 85%,#c9e0fc)"></div>
<div class="a rt" style="left:8px;top:366px;color:#1c3aa6;font-size:13px;font-weight:normal">收藏夹</div>
<div class="a" style="left:214px;top:367px;width:17px;height:13px;border-top:1px solid #fff;border-left:1px solid #fff;border-right:1px solid #000;border-bottom:1px solid #000;background:linear-gradient(#e8f2fe,#c7defc)"></div>
<svg style="left:220px;top:369px" width="8" height="9" viewBox="0 0 8 9" shape-rendering="crispEdges"><path d="M1 0h5v1H1zM1 0h1v5H1zM4 0h2v5H4zM0 5h8v1H0zM3 6h1v3H3z" fill="#000"/></svg>
<div class="a" style="left:2px;top:380px;width:249px;height:152px;background:#fff;border-top:2px solid #a0a0a0;border-left:2px solid #a0a0a0;border-right:1px solid #e8e8e8;border-bottom:1px solid #e8e8e8"></div>
<div class="a" style="left:4px;top:382px;width:122px;height:19px;background:#f0f0f0;border-top:1px solid #fff;border-left:1px solid #fff;border-right:1px solid #696969;border-bottom:1px solid #696969;box-shadow:inset -1px -1px 0 #a0a0a0"></div>
<div class="a" style="left:126px;top:382px;width:123px;height:19px;background:#f0f0f0;border-top:1px solid #fff;border-left:1px solid #fff;border-right:1px solid #696969;border-bottom:1px solid #696969;box-shadow:inset -1px -1px 0 #a0a0a0"></div>
<div class="a rt" style="left:9px;top:385px">名称</div>
<div class="a rt" style="left:132px;top:385px">路径</div>
<!-- canvas -->
<svg style="left:254px;top:193px" width="734" height="318" viewBox="254 193 734 318">
<path d="M465.5 323A113.06 113.06 0 0 0 691.5 323" fill="none" stroke="#fff" stroke-width="1" shape-rendering="crispEdges"/>
<path d="M553.6 260.3Q553.8 258.8 555 259.3L690.2 422.5L691.2 416.8L695.2 435.6L676.6 427.8L683.5 427.85z" fill="#f52a1c"/>
</svg>
<div class="a rt" style="left:659px;top:456px;color:#fff">弦高</div>
<div class="a" style="left:693px;top:452px;width:40px;height:21px;border:1px solid #6a6a6a;background:#000"></div>
<div class="a" style="left:695px;top:454px;width:22px;height:15px;background:#0a74d6"></div>
<div class="a" style="left:696px;top:455px;font-size:11.5px;line-height:13px;letter-spacing:-0.4px;color:#fff;font-family:'Liberation Sans'">7.23</div>
<!-- canvas mdi buttons -->
<svg style="left:937px;top:194px" width="46" height="13" viewBox="0 0 46 13"><g fill="#fff" stroke="#888" stroke-width="1"><rect x="1.5" y="7.5" width="10" height="4"/></g><g fill="none" stroke="#fff" stroke-width="2"><rect x="19" y="6" width="7" height="5"/><path d="M22 4V2h7v5h-2"/></g><path d="M34.5 2.5L43 11M43 2.5L34.5 11" stroke="#fff" stroke-width="2.8"/></svg>
<!-- v scrollbar -->
<div class="a" style="left:988px;top:193px;width:17px;height:318px;background:repeating-conic-gradient(#f6f6f6 0 25%,#e8e8e8 0 50%) 0 0/2px 2px"></div>
<div class="a" style="left:988px;top:193px;width:17px;height:17px;background:#f0f0f0;border-top:1px solid #fff;border-left:1px solid #fff;border-right:1px solid #696969;border-bottom:1px solid #696969;box-shadow:inset -1px -1px 0 #a0a0a0"></div>
<svg style="left:992px;top:199px" width="9" height="5" viewBox="0 0 9 5"><path d="M0 5h9L4.5 0z" fill="#000"/></svg>
<div class="a" style="left:988px;top:338px;width:17px;height:17px;background:#f0f0f0;border-top:1px solid #fff;border-left:1px solid #fff;border-right:1px solid #696969;border-bottom:1px solid #696969;box-shadow:inset -1px -1px 0 #a0a0a0"></div>
<div class="a" style="left:988px;top:494px;width:17px;height:17px;background:#f0f0f0;border-top:1px solid #fff;border-left:1px solid #fff;border-right:1px solid #696969;border-bottom:1px solid #696969;box-shadow:inset -1px -1px 0 #a0a0a0"></div>
<svg style="left:992px;top:500px" width="9" height="5" viewBox="0 0 9 5"><path d="M0 0h9L4.5 5z" fill="#000"/></svg>
<!-- model strip -->
<div class="a" style="left:254px;top:511px;width:752px;height:21px;background:linear-gradient(90deg,#ccdaee 0,#e4edf9 480px,#d6e3f4 734px)"></div>
<svg style="left:254px;top:511px" width="70" height="21" viewBox="0 0 70 21"><path d="M5 0L12 18.5H53L60 0" fill="#c9d8ee" stroke="#9fb2cc" stroke-width="1.3"/></svg>
<div class="a tt" style="left:270px;top:513px;color:#15233f;font-size:11.4px">Model</div>
<div class="a" style="left:716px;top:514px;width:18px;height:17px;border:1px solid #a9bbd4;border-radius:3px;background:linear-gradient(#e6eef9,#c9d8ee)"></div>
<svg style="left:719px;top:517px" width="11" height="10" viewBox="0 0 11 10"><path d="M5.5 8.6L1.2 4.2Q0.6 2 2.6 1.6Q4.3 1.4 5.5 3.4Q6.7 1.4 8.4 1.6Q10.4 2 9.8 4.2z" fill="#fff" stroke="#7a6a20" stroke-width="1.1" stroke-linejoin="round"/></svg>
<div class="a" style="left:738px;top:511px;width:2px;height:20px;background:repeating-linear-gradient(#9a9a9a 0 2px,transparent 2px 4px)"></div>
<div class="a" style="left:741px;top:511px;width:247px;height:17px;background:repeating-conic-gradient(#f6f6f6 0 25%,#e8e8e8 0 50%) 0 0/2px 2px"></div>
<div class="a" style="left:741px;top:511px;width:17px;height:17px;background:#f0f0f0;border-top:1px solid #fff;border-left:1px solid #fff;border-right:1px solid #696969;border-bottom:1px solid #696969;box-shadow:inset -1px -1px 0 #a0a0a0"></div>
<svg style="left:746px;top:515px" width="5" height="9" viewBox="0 0 5 9"><path d="M5 0v9L0 4.5z" fill="#000"/></svg>
<div class="a" style="left:849px;top:511px;width:17px;height:17px;background:#f0f0f0;border-top:1px solid #fff;border-left:1px solid #fff;border-right:1px solid #696969;border-bottom:1px solid #696969;box-shadow:inset -1px -1px 0 #a0a0a0"></div>
<div class="a" style="left:971px;top:511px;width:17px;height:17px;background:#f0f0f0;border-top:1px solid #fff;border-left:1px solid #fff;border-right:1px solid #696969;border-bottom:1px solid #696969;box-shadow:inset -1px -1px 0 #a0a0a0"></div>
<svg style="left:977px;top:515px" width="5" height="9" viewBox="0 0 5 9"><path d="M0 0v9L5 4.5z" fill="#000"/></svg>
<!-- command area -->
<div class="a" style="left:2px;top:537px;width:1003px;height:15px;border:1px solid #858585;border-radius:2px;background:linear-gradient(#e6f1fe,#c3dcfb 50%,#b5d4fa 85%,#c9e0fc)"></div>
<div class="a rt" style="left:8px;top:537px;color:#1c3aa6;font-size:13px;font-weight:normal">命令行</div>
<svg style="left:990px;top:541px" width="8" height="9" viewBox="0 0 8 9" shape-rendering="crispEdges"><path d="M1 0h5v1H1zM1 0h1v5H1zM4 0h2v5H4zM0 5h8v1H0zM3 6h1v3H3z" fill="#000"/></svg>
<div class="a" style="left:2px;top:553px;width:1002px;height:59px;background:#fff;border-top:2px solid #a0a0a0;border-left:2px solid #a0a0a0;border-right:1px solid #e8e8e8;border-bottom:1px solid #e8e8e8"></div>
<div class="a tt" style="left:4px;top:556px;color:#000;font-size:13px;line-height:14.5px">取消命令<br>圆弧</div>
<div class="a" style="left:987px;top:555px;width:16px;height:56px;background:#f0f0f0"></div>
<div class="a" style="left:987px;top:577px;width:16px;height:17px;background:#cdcdcd"></div>
<svg style="left:990px;top:561px" width="10" height="7" viewBox="0 0 10 7"><path d="M1 6L5 2L9 6" fill="none" stroke="#606060" stroke-width="1.6"/></svg>
<svg style="left:990px;top:599px" width="10" height="7" viewBox="0 0 10 7"><path d="M1 1L5 5L9 1" fill="none" stroke="#606060" stroke-width="1.6"/></svg>
<!-- command input -->
<div class="a rt" style="left:8px;top:617px">弦高</div>
<div class="a rt" style="left:43px;top:617px;font-family:'Liberation Sans'">[</div>
<div class="a rt" style="left:55px;top:617px;color:#1212f0">偏移<u style="font-family:'Liberation Sans'">(w)</u></div>
<div class="a rt" style="left:106px;top:617px;font-family:'Liberation Sans'">/</div>
<div class="a rt" style="left:119px;top:617px;color:#1212f0">双重偏移<u style="font-family:'Liberation Sans'">(x)</u></div>
<div class="a rt" style="left:192px;top:617px;font-family:'Liberation Sans'">/</div>
<div class="a rt" style="left:206px;top:617px;color:#1212f0">取消<u style="font-family:'Liberation Sans'">(z)</u></div>
<div class="a rt" style="left:253px;top:617px;font-family:'Liberation Sans'">]</div>
<div class="a" style="left:265px;top:613px;width:739px;height:21px;background:#fff;border-top:2px solid #a0a0a0;border-left:2px solid #a0a0a0;border-right:1px solid #e8e8e8;border-bottom:1px solid #e8e8e8"></div>
<!-- status -->
<div class="a" style="left:1px;top:635px;width:1004px;height:20px;border:1px solid #9fb3cf;background:linear-gradient(#eaf1fb,#d6e3f4 60%,#c7d8ef)"></div>
<div class="a tt" style="left:9px;top:638px;color:#2a3a5a;font-size:11.2px">New1.dxf</div>
<div class="a" style="left:472px;top:636px;width:1px;height:18px;background:#b8c8de;box-shadow:1px 0 0 #fff"></div>
<div class="a" style="left:491px;top:636px;width:1px;height:18px;background:#b8c8de;box-shadow:1px 0 0 #fff"></div>
<div class="a" style="left:511px;top:636px;width:1px;height:18px;background:#b8c8de;box-shadow:1px 0 0 #fff"></div>
<div class="a" style="left:530px;top:636px;width:1px;height:18px;background:#b8c8de;box-shadow:1px 0 0 #fff"></div>
<div class="a" style="left:553px;top:636px;width:1px;height:18px;background:#b8c8de;box-shadow:1px 0 0 #fff"></div>
<div class="a" style="left:802px;top:636px;width:1px;height:18px;background:#b8c8de;box-shadow:1px 0 0 #fff"></div>
<div class="a" style="left:924px;top:636px;width:1px;height:18px;background:#b8c8de;box-shadow:1px 0 0 #fff"></div>
<svg style="left:474px;top:636px" width="15" height="16" viewBox="0 0 15 16"><path d="M2 9V6A5 5 0 0 1 12 6V9H9V6A2 2 0 0 0 5 6V9z" fill="#b83040"/><path d="M7 2.5A3.5 3.5 0 0 1 12 6V9H9V6" fill="#3a60c0"/><path d="M1.5 10l3 4 6-8" fill="none" stroke="#1a9a30" stroke-width="2.2"/><rect x="11" y="12" width="3" height="3" fill="#e01010"/></svg>
<svg style="left:493px;top:636px" width="16" height="16" viewBox="0 0 16 16"><g fill="#333"><rect x="1" y="2" width="1.5" height="1.5"/><rect x="7" y="2" width="1.5" height="1.5"/><rect x="13" y="2" width="1.5" height="1.5"/><rect x="1" y="8" width="1.5" height="1.5"/><rect x="7" y="8" width="1.5" height="1.5"/><rect x="13" y="8" width="1.5" height="1.5"/><rect x="1" y="14" width="1.5" height="1.5"/><rect x="7" y="14" width="1.5" height="1.5"/><rect x="13" y="14" width="1.5" height="1.5"/></g></svg>
<svg style="left:514px;top:638px" width="14" height="13" viewBox="0 0 14 13"><path d="M7 0.5V12M0.5 12.2H13.5" stroke="#1f56c8" stroke-width="1.2"/></svg>
<svg style="left:534px;top:636px" width="17" height="16" viewBox="0 0 17 16"><path d="M3 9A4 4 0 1 1 11 9" fill="none" stroke="#2a4a8a" stroke-width="1.2"/><path d="M1.5 9l3.5 4.5 7-10" fill="none" stroke="#1a9a30" stroke-width="2.4"/><path d="M9 9L16 1M8 10h8" stroke="#222" stroke-width="1"/></svg>
<div class="a tt" style="left:558px;top:638px;color:#2a3a5a;font-size:11.35px;font-family:'Liberation Sans'">(0.2650433; -4.638259; 0)</div>
<div class="a tt" style="left:929px;top:638px;color:#2a3a5a;font-size:10.9px;font-family:'Liberation Sans'">297 x 210 x 0</div>
</body></html>
